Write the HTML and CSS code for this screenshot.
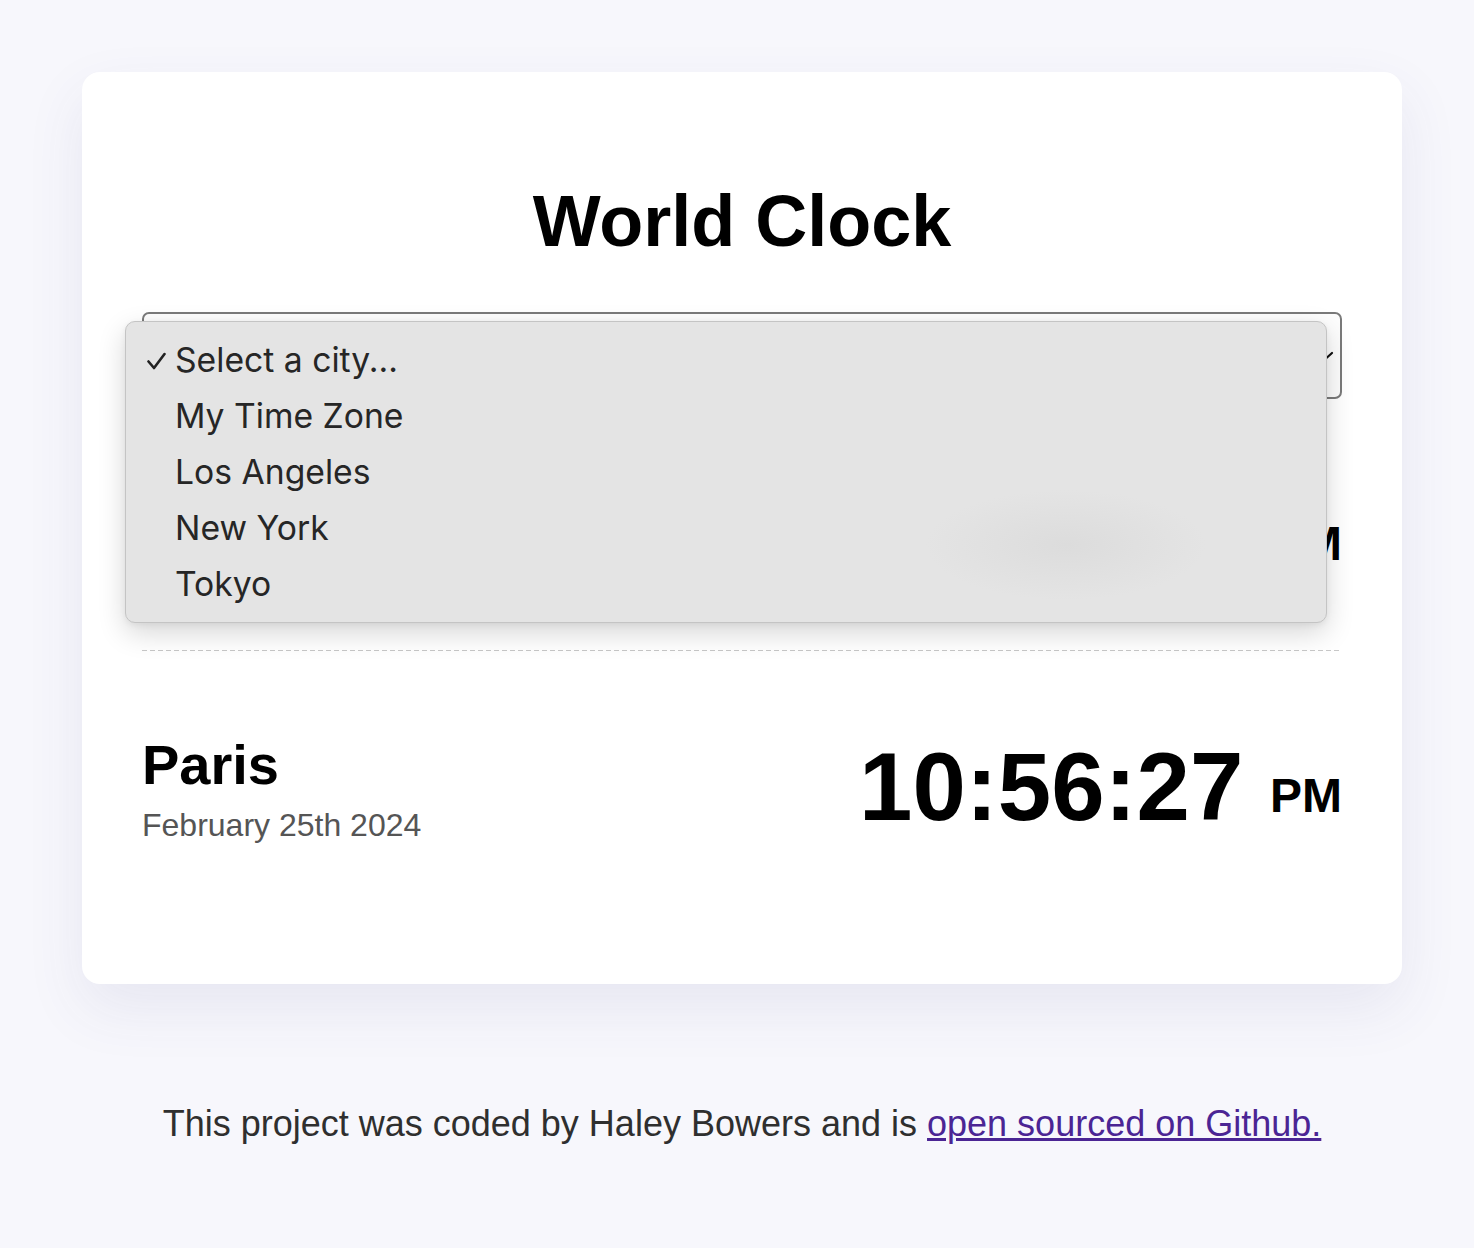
FILE: index.html
```html
<!DOCTYPE html>
<html lang="en">
<head>
<meta charset="utf-8">
<title>World Clock</title>
<link rel="stylesheet" href="styles.css">
</head>
<body>
<div class="container">
  <main class="card">
    <h1 class="title">World Clock</h1>
    <div class="picker">
      <div class="select">
        <span class="select-label">Select a city...</span>
        <svg class="chevron" width="24" height="14" viewBox="0 0 24 14"><polyline points="2,2 12,11 22,2" fill="none" stroke="#111" stroke-width="2.2" stroke-linecap="round" stroke-linejoin="round"/></svg>
      </div>
      <ul class="menu">
        <li class="menu-item selected"><svg class="check" width="20" height="20" viewBox="0 0 20 20"><polyline points="2.5,10.5 8,17 18.5,3" fill="none" stroke="#222" stroke-width="2.6" stroke-linecap="round" stroke-linejoin="round"/></svg>Select a city...</li>
        <li class="menu-item">My Time Zone</li>
        <li class="menu-item">Los Angeles</li>
        <li class="menu-item">New York</li>
        <li class="menu-item">Tokyo</li>
      </ul>
    </div>
    <div class="cities">
      <div class="city city-covered">
        <div class="city-info">
          <h2 class="city-name">Los Angeles</h2>
          <div class="city-date">February 25th 2024</div>
        </div>
        <div class="city-time">1:56:27 <small class="ampm">PM</small></div>
      </div>
      <div class="city">
        <div class="city-info">
          <h2 class="city-name">Paris</h2>
          <div class="city-date">February 25th 2024</div>
        </div>
        <div class="city-time">10:56:27 <small class="ampm">PM</small></div>
      </div>
    </div>
  </main>
  <footer class="footer">This project was coded by Haley Bowers and is <a class="footer-link" href="#">open sourced on Github.</a></footer>
</div>
</body>
</html>
```
FILE: styles.css
```css
* { box-sizing: border-box; }

body {
  margin: 0;
  padding: 0 0 0 10px;
  background: #f7f7fc;
  font-family: "Liberation Sans", Arial, sans-serif;
  color: #000;
}

.container {
  width: 1320px;
  margin: 72px auto 0;
}

.card {
  background: #fff;
  border-radius: 18px;
  padding: 113px 60px 81px;
  box-shadow: 0 24px 60px rgba(70, 70, 130, 0.09);
}

.title {
  margin: 0 0 55px;
  font-size: 72px;
  line-height: 72px;
  font-weight: 700;
  text-align: center;
}

.picker {
  position: relative;
}

.select {
  height: 87px;
  border: 2px solid #7a7a7a;
  border-radius: 7px;
  background: #fdfdfd;
  display: flex;
  align-items: center;
  justify-content: space-between;
  padding: 0 6px 0 18px;
  font-family: Inter, "Noto Sans", sans-serif;
  font-size: 34px;
  color: #222;
}

/* the option label sits under the open menu, as in the reference */
.select-label { visibility: hidden; }

.chevron { margin-top: 4px; }

.menu {
  position: absolute;
  left: -17px;
  top: 9px;
  width: 1202px;
  height: 302px;
  margin: 0;
  padding: 10px 0;
  list-style: none;
  border: 1px solid #c4c4c4;
  border-radius: 10px;
  background:
    radial-gradient(ellipse 140px 55px at 940px 223px, #dcdcdc 0%, rgba(228,228,228,0) 100%),
    #e4e4e4;
  box-shadow: 0 10px 28px rgba(0, 0, 0, 0.16), 0 2px 6px rgba(0, 0, 0, 0.06);
  font-family: Inter, "Noto Sans", sans-serif;
  font-size: 33.7px;
  color: #262626;
  z-index: 2;
}

.menu-item {
  position: relative;
  height: 56px;
  line-height: 56px;
  padding-left: 49px;
}

.check {
  position: absolute;
  left: 20px;
  top: 19px;
}

.city {
  height: 252px;
  display: flex;
  justify-content: space-between;
  align-items: flex-start;
  padding-top: 86px;
}

.city:first-child {
  background-image: linear-gradient(to right, #c8c8c8 5px, transparent 5px);
  background-size: 8px 1px;
  background-repeat: repeat-x;
  background-position: left bottom;
}

/* covered by the open menu in the reference */
.city-covered .city-info { visibility: hidden; }

.city-name {
  margin: 0;
  font-size: 56px;
  line-height: 56px;
  font-weight: 700;
}

.city-date {
  margin-top: 13px;
  font-size: 32px;
  line-height: 38px;
  color: #555;
}

.city-time {
  margin-top: 2px;
  font-size: 96px;
  line-height: 96px;
  font-weight: 700;
  white-space: nowrap;
}

.ampm {
  font-size: 48px;
  line-height: 1;
  vertical-align: 8px;
}

.footer {
  margin-top: 118px;
  text-align: center;
  font-size: 36px;
  line-height: 43px;
  color: #2f2f2f;
}

.footer-link {
  color: #4b2594;
  text-decoration: underline;
}
```
